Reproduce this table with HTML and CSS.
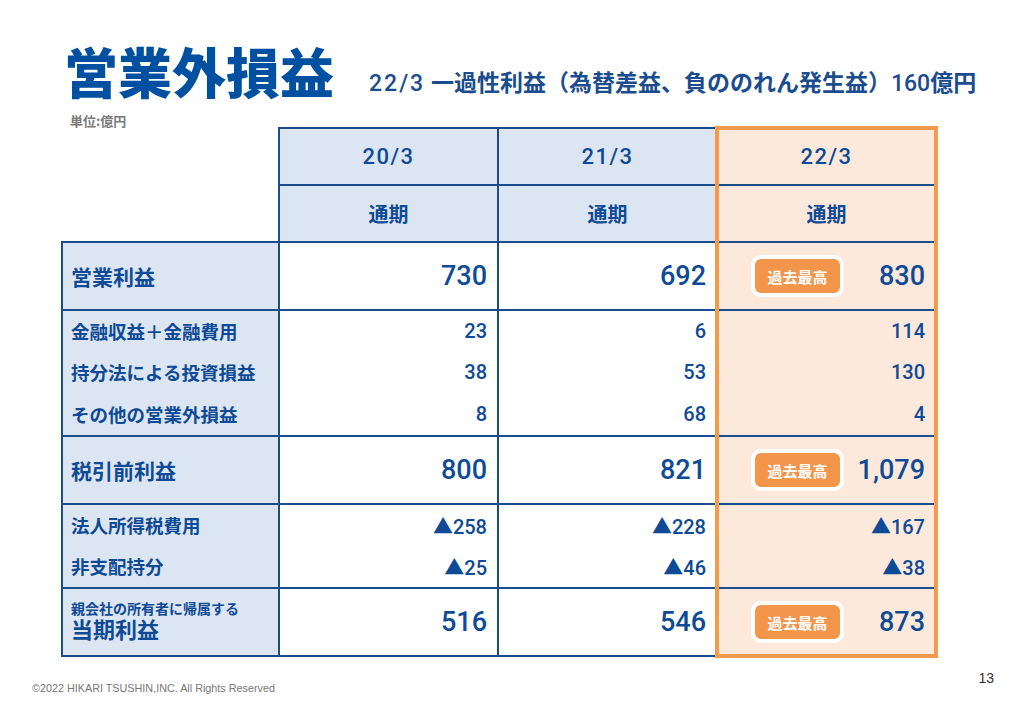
FILE: index.html
```html
<!DOCTYPE html>
<html lang="ja">
<head>
<meta charset="utf-8">
<link rel="stylesheet" href="styles.css">
</head>
<body>
<div class="page">
  <header class="head">
    <h1 class="title">営業外損益</h1>
    <p class="sub"><span class="dg sp">22/3</span> 一過性利益（為替差益、負ののれん発生益）<span class="dg">160</span>億円</p>
  </header>
  <div class="unit">単位:億円</div>
  <div class="tablewrap">
    <div class="grid">
      <div class="blank"></div>
      <div class="c hd yr">20/3</div>
      <div class="c hd yr">21/3</div>
      <div class="c hl yr last">22/3</div>

      <div class="blank"></div>
      <div class="c hd per">通期</div>
      <div class="c hd per">通期</div>
      <div class="c hl per last">通期</div>

      <div class="c lab big">営業利益</div>
      <div class="c num bign">730</div>
      <div class="c num bign">692</div>
      <div class="c num bign hl last rec"><span class="badge">過去最高</span><span>830</span></div>

      <div class="c lab sm">金融収益＋金融費用</div>
      <div class="c num smn">23</div>
      <div class="c num smn">6</div>
      <div class="c num smn hl last">114</div>

      <div class="c nt lab sm">持分法による投資損益</div>
      <div class="c nt num smn">38</div>
      <div class="c nt num smn">53</div>
      <div class="c nt num smn hl last">130</div>

      <div class="c nt lab sm">その他の営業外損益</div>
      <div class="c nt num smn">8</div>
      <div class="c nt num smn">68</div>
      <div class="c nt num smn hl last">4</div>

      <div class="c lab big">税引前利益</div>
      <div class="c num bign">800</div>
      <div class="c num bign">821</div>
      <div class="c num bign hl last rec"><span class="badge">過去最高</span><span>1,079</span></div>

      <div class="c lab sm">法人所得税費用</div>
      <div class="c num smn">▲258</div>
      <div class="c num smn">▲228</div>
      <div class="c num smn hl last">▲167</div>

      <div class="c nt lab sm">非支配持分</div>
      <div class="c nt num smn">▲25</div>
      <div class="c nt num smn">▲46</div>
      <div class="c nt num smn hl last">▲38</div>

      <div class="c lab bot two"><span class="l1">親会社の所有者に帰属する</span><span class="l2">当期利益</span></div>
      <div class="c num bign bot">516</div>
      <div class="c num bign bot">546</div>
      <div class="c num bign hl last bot rec"><span class="badge">過去最高</span><span>873</span></div>
    </div>
    <div class="frame"></div>
  </div>
  <footer class="foot">
    <span class="copy">©2022 HIKARI TSUSHIN,INC. All Rights Reserved</span>
    <span class="pno">13</span>
  </footer>
</div>
</body>
</html>
```

FILE: styles.css
```css
html, body {
  margin: 0;
  padding: 0;
  background: #ffffff;
}
body {
  font-family: Roboto, "Noto Sans CJK JP", sans-serif;
  color: #0e4a96;
}
.page {
  width: 1034px;
  height: 708px;
  overflow: hidden;
  position: relative;
}
.head {
  display: flex;
  align-items: flex-start;
  padding: 44px 0 0 64px;
  height: 54px;
}
.title {
  margin: 0;
  font-family: "Noto Sans CJK JP", sans-serif;
  font-size: 54px;
  line-height: 54px;
  font-weight: 900;
  color: #0050a2;
}
.sub {
  margin: 25px 0 0 35px;
  font-size: 23px;
  line-height: 30px;
  font-weight: 700;
  color: #1a4c8e;
  white-space: nowrap;
}
.dg { font-weight: 500; }
.sp { letter-spacing: 2px; }
.unit {
  margin: 16px 0 0 70px;
  height: 13px;
  font-family: "Noto Sans CJK JP", sans-serif;
  font-size: 13px;
  line-height: 13px;
  font-weight: 700;
  color: #7a7a7a;
}
.tablewrap {
  position: relative;
  margin-left: 61px;
  width: 876px;
}
.grid {
  display: grid;
  grid-template-columns: 217px 219px 219px 221px;
  grid-template-rows: 57px 57px 68px 42px 42px 42px 68px 42px 42px 70px;
}
.c {
  box-sizing: border-box;
  border-left: 2px solid #1b4c8c;
  border-top: 2px solid #1b4c8c;
  display: flex;
  align-items: center;
  font-weight: 700;
  background: #ffffff;
}
.nt { border-top: none; }
.last { border-right: 2px solid #1b4c8c; }
.bot { border-bottom: 2px solid #1b4c8c; }
.hd { background: #dce6f2; }
.lab { background: #dce6f2; padding-left: 8px; }
.hl { background: #fde9dc; }
.yr {
  justify-content: center;
  font-size: 22px;
  font-weight: 500;
  letter-spacing: 1.5px;
}
.per {
  justify-content: center;
  font-size: 20px;
}
.big { font-size: 21px; }
.sm { font-size: 18.5px; }
.two {
  flex-direction: column;
  align-items: flex-start;
  justify-content: center;
}
.l1 { font-size: 14px; line-height: 18px; }
.l2 { font-size: 22px; line-height: 26px; }
.num {
  justify-content: flex-end;
  padding-right: 10px;
  font-weight: 500;
}
.bign { font-size: 27px; }
.smn { font-size: 20px; }
.rec {
  justify-content: space-between;
  padding-left: 33px;
}
.badge {
  box-sizing: border-box;
  width: 93px;
  height: 42px;
  border: 4px solid #ffffff;
  border-radius: 10px;
  background: #f3954b;
  color: #ffffff;
  font-family: "Noto Sans CJK JP", sans-serif;
  font-size: 15px;
  font-weight: 700;
  display: flex;
  align-items: center;
  justify-content: center;
}
.frame {
  position: absolute;
  left: 654px;
  top: -1px;
  width: 223px;
  height: 532px;
  box-sizing: border-box;
  border: 4px solid #f39a4c;
  pointer-events: none;
}
.foot {
  display: flex;
  justify-content: space-between;
  align-items: flex-start;
  margin-top: 13px;
  padding: 0 40px 0 32px;
}
.copy {
  margin-top: 12px;
  font-family: "Liberation Sans", Arial, sans-serif;
  font-size: 10.8px;
  line-height: 12px;
  color: #777777;
}
.pno {
  font-family: "Liberation Sans", Arial, sans-serif;
  font-size: 14px;
  line-height: 16px;
  color: #333333;
}
```
